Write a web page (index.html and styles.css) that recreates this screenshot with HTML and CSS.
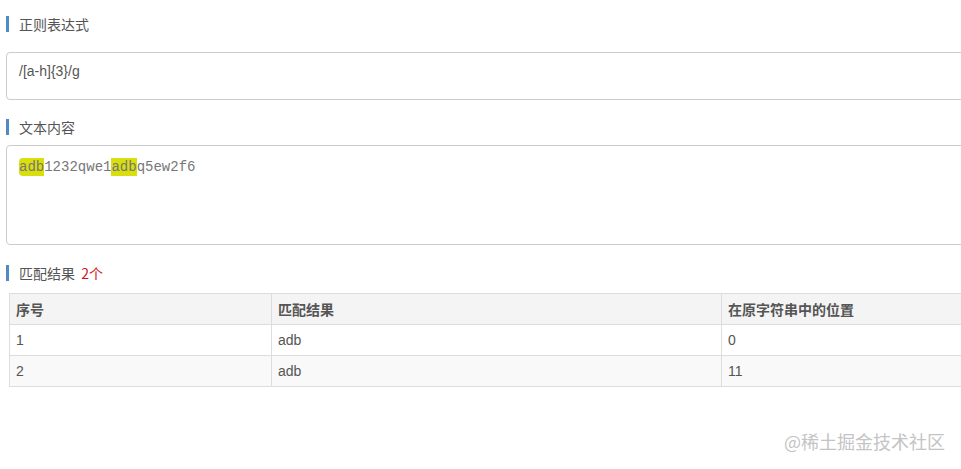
FILE: index.html
```html
<!DOCTYPE html>
<html lang="zh">
<head>
<meta charset="utf-8">
<title>正则表达式</title>
<link rel="stylesheet" href="styles.css">
</head>
<body>
<div class="page">
  <div class="title t1">正则表达式</div>
  <div class="box box-regex">/[a-h]{3}/g</div>

  <div class="title t2">文本内容</div>
  <div class="box box-text"><span class="hl first">adb</span>1232qwe1<span class="hl">adb</span>q5ew2f6</div>

  <div class="title t3">匹配结果 <span class="count">2个</span></div>
  <table class="result">
    <thead>
      <tr><th class="c1">序号</th><th class="c2">匹配结果</th><th class="c3">在原字符串中的位置</th></tr>
    </thead>
    <tbody>
      <tr><td>1</td><td>adb</td><td>0</td></tr>
      <tr class="alt"><td>2</td><td>adb</td><td>11</td></tr>
    </tbody>
  </table>
</div>
<div class="watermark">@稀土掘金技术社区</div>
</body>
</html>
```

FILE: styles.css
```css
html, body {
  margin: 0;
  padding: 0;
  overflow: hidden;
  background: #fff;
}
body {
  font-family: "Liberation Sans", Arial, "Noto Sans CJK SC", sans-serif;
  color: #555;
  font-size: 14px;
}
.page {
  width: 1140px;
  padding: 0 0 0 6px;
  display: flex;
  flex-direction: column;
  align-items: flex-start;
}
.title {
  border-left: 3px solid #4d8cc3;
  padding-left: 10px;
  height: 16px;
  line-height: 16px;
  font-size: 14px;
  color: #555;
  font-family: "Noto Sans CJK SC", sans-serif;
}
.t1 { margin-top: 16px; }
.t2 { margin-top: 19px; }
.t3 { margin-top: 20px; }
.count { color: #d0161b; margin-left: 3px; }
.box {
  box-sizing: border-box;
  width: 1100px;
  border: 1px solid #ccc;
  border-radius: 4px;
  padding-left: 12px;
}
.box-regex {
  margin-top: 20px;
  height: 48px;
  padding-top: 8px;
  line-height: 20px;
  font-size: 14px;
  color: #555;
}
.box-text {
  margin-top: 10px;
  height: 100px;
  padding-top: 12px;
  font-family: "Liberation Mono", "Courier New", monospace;
  font-size: 14px;
  line-height: 18px;
  color: #777;
}
.hl {
  background: #d8df0c;
  padding: 1px 0;
}
.hl.first { border-radius: 4px 0 0 4px; }
.result {
  margin-top: 12px;
  margin-left: 3px;
  border-collapse: collapse;
  width: 1100px;
  table-layout: fixed;
  font-size: 14px;
  color: #555;
}
.result th, .result td {
  border: 1px solid #ddd;
  height: 31px;
  padding: 0 6px;
  text-align: left;
  box-sizing: border-box;
}
.result th {
  background: #f4f4f4;
  font-weight: bold;
  font-family: "Noto Sans CJK SC", sans-serif;
  color: #555;
}
.result .c1 { width: 262px; }
.result .c2 { width: 450px; }
.result tr.alt td { background: #f9f9f9; }
.watermark {
  position: absolute;
  left: 784px;
  top: 429px;
  font-size: 18px;
  line-height: 24px;
  color: #c4c4c4;
  font-family: "Noto Sans CJK SC", sans-serif;
}
```
